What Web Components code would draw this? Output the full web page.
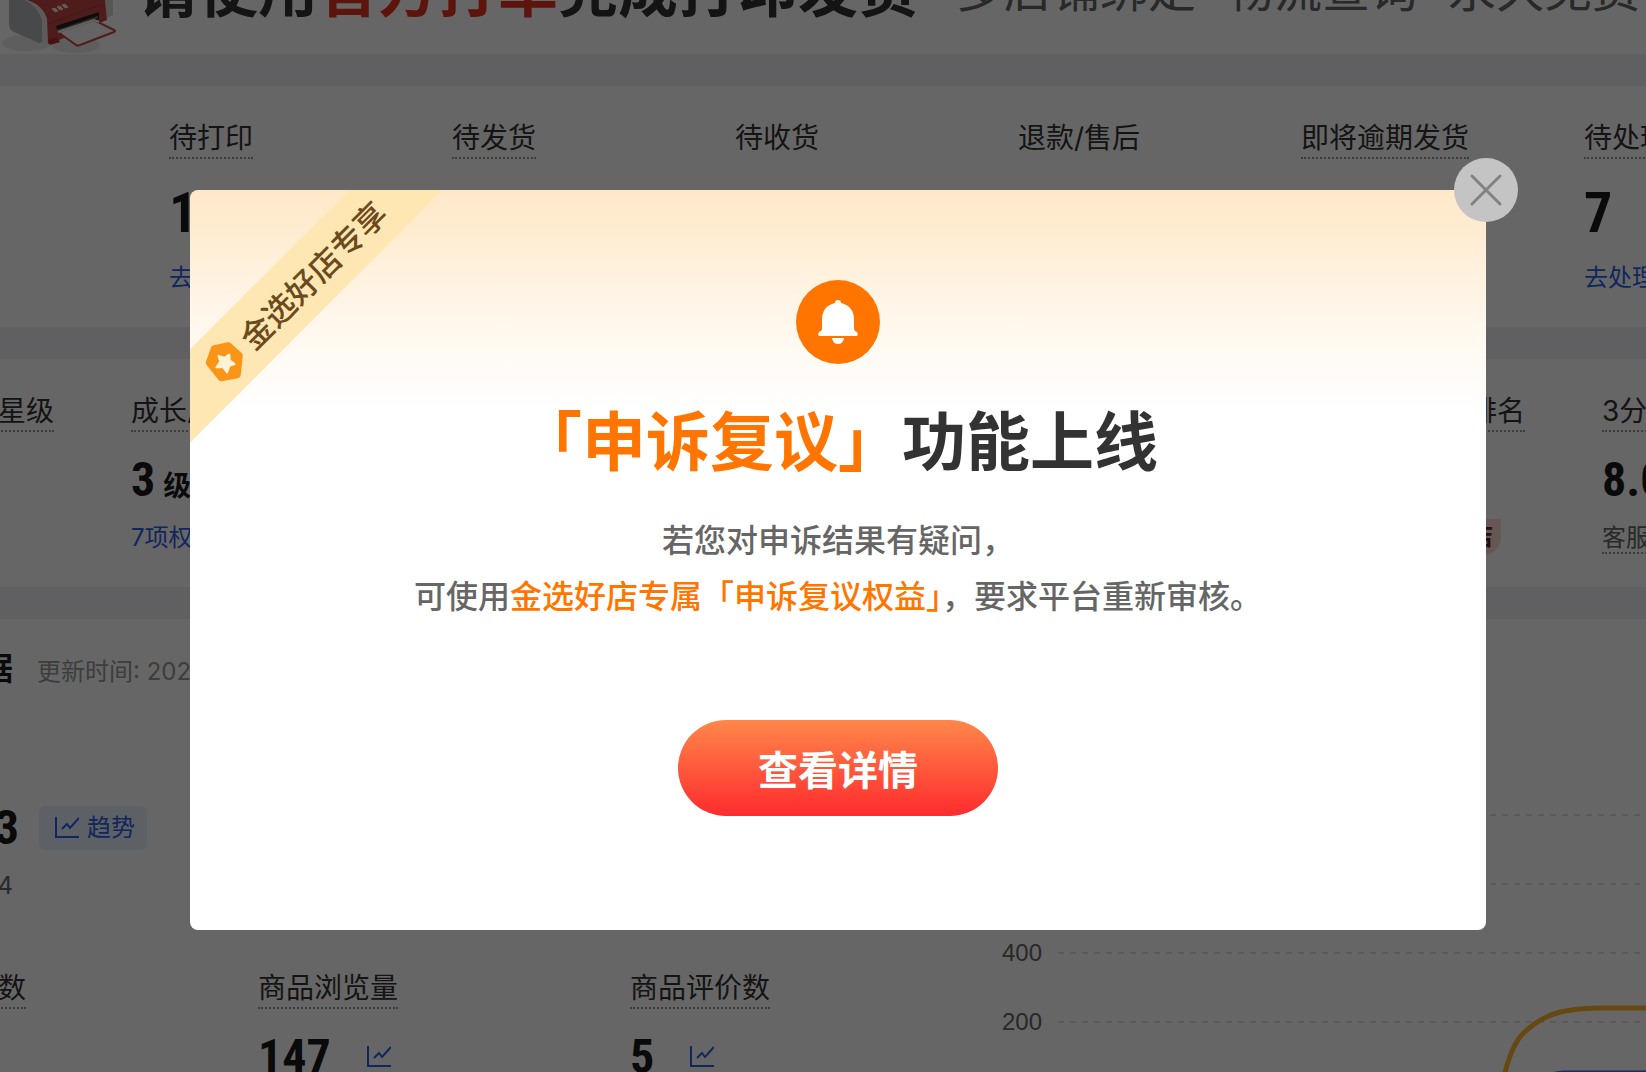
<!DOCTYPE html>
<html lang="zh-CN">
<head>
<meta charset="utf-8">
<meta name="viewport" content="width=device-width, initial-scale=1">
<title>商家后台</title>
<style>
  :root{
    --text:#333;--strong:#1a1a1a;--dim:#666;--faint:#999;--link:#2f5fea;--orange:#ff7500;
    --gap-bg:#f0f0f5;--num:"Liberation Sans Narrow","Roboto Condensed",Roboto,sans-serif;
  }
  html,body{margin:0;height:100%}
  body{position:relative;overflow:hidden;background:#fff;color:var(--text);font-family:Inter,"Noto Sans CJK SC",sans-serif}
  notice-modal b,notice-modal em{font-style:normal;font-weight:inherit;color:var(--orange)}
</style>
</head>
<body>
<shop-page>
  <print-banner></print-banner>

  <stat-row class="orders" large>
    <stat-item label="待打印" value="1" hint="去打印" link></stat-item>
    <stat-item label="待发货"></stat-item>
    <stat-item label="待收货" plain></stat-item>
    <stat-item label="退款/售后" plain></stat-item>
    <stat-item label="即将逾期发货"></stat-item>
    <stat-item label="待处理" value="7" hint="去处理" link></stat-item>
  </stat-row>

  <stat-row class="levels">
    <stat-item label="星级" class="lead"></stat-item>
    <stat-item label="成长层级" value="3" unit="级" hint="7项权益" link class="grow"></stat-item>
    <stat-item label="排名" class="rank"><span slot="hint">店</span></stat-item>
    <stat-item label="3分钟" value="8.0" hint="客服" class="last"></stat-item>
  </stat-row>

  <data-panel></data-panel>
</shop-page>

<notice-modal>
  <corner-ribbon slot="ribbon">金选好店专享</corner-ribbon>
  <span slot="title"><b>「申诉复议」</b>功能上线</span>
  <p slot="body">若您对申诉结果有疑问，<br>可使用<em>金选好店专属「申诉复议权益」</em>，要求平台重新审核。</p>
  <span slot="action">查看详情</span>
</notice-modal>

<script>
// Wspólny pomocnik: podpina shadow root z gotowym HTML
function shadow(el, html){
  const s = el.attachShadow({mode:'open'});
  s.innerHTML = html;
  return s;
}

// Układ strony: kolejne panele rozdzielone szarym pasem
customElements.define('shop-page', class extends HTMLElement{
  constructor(){
    super();
    shadow(this, `
      <style>
        :host{display:flex;flex-direction:column;gap:32px;background:var(--gap-bg)}
        ::slotted(*){background:#fff}
      </style>
      <slot></slot>
    `);
  }
});

customElements.define('print-banner', class extends HTMLElement{
  constructor(){
    super();
    shadow(this, `
      <style>
        :host{display:flex;align-items:flex-end;height:54px;overflow:hidden;white-space:nowrap}
        svg{flex:none;width:120px;height:54px;margin-right:18px}
        .copy{display:flex;align-items:center;padding-bottom:34px}
        h1{margin:0 38px 0 0;font-size:60px;line-height:60px;font-weight:700;color:var(--text)}
        h1 em{font-style:normal;color:#e6321e}
        ul{display:flex;gap:30px;margin:0;padding:0;list-style:none;font-size:48px;line-height:48px;color:var(--dim)}
      </style>
      <svg viewBox="0 0 120 54" aria-hidden="true">
        <ellipse cx="27" cy="43" rx="25" ry="8" fill="#ececec"/>
        <ellipse cx="76" cy="45" rx="24" ry="8" fill="#ebebeb"/>
        <path d="M105 0h8v15l-6 3z" fill="#d6d6d6"/>
        <path d="M24 0h81l2 20-48 20-11 4-3-18z" fill="#c04745"/>
        <path d="M48 24l55-20" stroke="#a83b3a" stroke-width="1"/>
        <path d="M48 40l9-3 3 5-10 3z" fill="#b22e2c"/>
        <path d="M9 0h18q16 5 20 19l1 23-8 1-28-12q-3-3-3-8z" fill="#e3e3e3"/>
        <path d="M9 0h15q13 5 18 20l0 22-3 1-27-12q-3-3-3-8z" fill="#b4b6b8"/>
        <path d="M52 9l3-1 3 3-3 1zM57 7l3-1 3 3-3 1zM62 5l3-1 3 3-3 1z" fill="#f3dcd9" stroke="#f3dcd9"/>
        <path d="M56 26l43-14v7l-41 13z" fill="#222"/>
        <path d="M57 30l41-14v2l-40 14z" fill="#777"/>
        <path d="M58 32l36-12 20 10q2 1 0 2l-34 13q-2 1-4 0z" fill="#fafafa" stroke="#cf4643" stroke-width="2"/>
        <path d="M58 32l36-12 5 2" fill="none" stroke="#fafafa" stroke-width="2"/>
      </svg>
      <div class="copy">
        <h1>请使用<em>官方打单</em>完成打印发货</h1>
        <ul><li>多店铺绑定</li><li>物流查询</li><li>永久免费</li></ul>
      </div>
    `);
  }
});

// Pojedyncza statystyka: etykieta, liczba, podpis
// attrs: label, value, unit, hint, link (podpis jako odnośnik), plain (bez kropkowanej linii)
customElements.define('stat-item', class extends HTMLElement{
  constructor(){
    super();
    const a = n => this.getAttribute(n) || '';
    const hint = !a('hint') ? '<slot name="hint"></slot>'
      : this.hasAttribute('link') ? `<a href="#">${a('hint')}</a>` : `<span class="dotted">${a('hint')}</span>`;
    shadow(this, `
      <style>
        :host{display:flex;flex-direction:column;align-items:flex-start;white-space:nowrap}
        .label{font-size:28px;line-height:38px;border-bottom:2px dotted var(--faint);color:var(--text)}
        :host([plain]) .label{border-color:transparent}
        .value{display:flex;align-items:baseline;gap:8px;margin-top:var(--value-gap,24px);height:var(--value-size,48px);font:700 var(--value-size,48px)/var(--value-size,48px) var(--num);color:var(--strong)}
        .value small{font:700 28px/28px "Noto Sans CJK SC",sans-serif}
        .hint{margin-top:var(--hint-gap,20px);font-size:24px;line-height:28px;height:30px;color:var(--dim)}
        a{color:var(--link);text-decoration:none}
        .dotted{display:block;border-bottom:2px dotted var(--faint)}
        ::slotted([slot=hint]){display:block;width:16px;margin-top:-5px;padding:4px 8px;direction:rtl;overflow:hidden;border-bottom-right-radius:18px;background:#ffd9d5;color:#5a2a20;font-weight:700}
      </style>
      <div class="label">${a('label')}</div>
      <div class="value">${a('value')}${a('unit') ? `<small>${a('unit')}</small>` : ''}</div>
      <div class="hint">${hint}</div>
    `);
  }
});

customElements.define('stat-row', class extends HTMLElement{
  constructor(){
    super();
    shadow(this, `
      <style>
        :host{display:flex;gap:77px;padding:33px 0;overflow:hidden}
        :host([large]){--value-size:56px;--value-gap:26px;--hint-gap:23px;display:grid;grid-auto-flow:column;grid-auto-columns:283px;gap:0;padding-left:169px}
        ::slotted(.lead){flex:none;width:54px;align-items:flex-end}
        ::slotted(.grow){flex:1}
        ::slotted(.rank){align-items:flex-start}
        ::slotted(.last){flex:none;width:44px}
      </style>
      <slot></slot>
    `);
  }
});

customElements.define('trend-icon', class extends HTMLElement{
  constructor(){
    super();
    shadow(this, `
      <style>:host{display:block;width:24px;height:24px;color:var(--link)}svg{display:block}</style>
      <svg width="24" height="24" viewBox="0 0 24 24" fill="none" stroke="currentColor" stroke-width="2" aria-hidden="true">
        <path d="M1 1v20h23"/><path d="M7 13l5-5 3 4 9-10"/>
      </svg>
    `);
  }
});

// Wykres liniowy z przerywaną siatką
customElements.define('line-chart', class extends HTMLElement{
  constructor(){
    super();
    const ticks = [800,600,400,200,0];
    shadow(this, `
      <style>
        :host{display:block;position:relative}
        .tick{display:flex;align-items:center;gap:16px;height:69px;font:24px/24px "Liberation Sans",sans-serif;color:var(--dim)}
        .tick i{flex:1;height:2px;background:repeating-linear-gradient(90deg,#e1e1e1 0 6px,transparent 6px 12px)}
        svg{position:absolute;right:0;top:207px}
      </style>
      ${ticks.map(t=>`<div class="tick"><span>${t}</span><i></i></div>`).join('')}
      <svg width="160" height="138" viewBox="0 0 160 138" fill="none" stroke-width="5" aria-hidden="true">
        <path d="M18 89C24 66 30 51 42 42C62 25 80 22 112 21H160" stroke="#ffb52e"/>
        <path d="M36 138C46 100 58 86 78 86H160" stroke="#3d6eff"/>
      </svg>
    `);
  }
});

customElements.define('data-panel', class extends HTMLElement{
  constructor(){
    super();
    shadow(this, `
      <style>
        :host{display:grid;grid-template-columns:1002px 1fr;white-space:nowrap}
        .left{padding-top:32px}
        .line{display:flex;align-items:center;gap:20px}
        .lead{display:flex;justify-content:flex-end;width:19px}
        .head{align-items:baseline;gap:24px;height:36px;margin-bottom:117px}
        .head .lead,.prev .lead{width:13px}
        h2{margin:0;font-size:32px;line-height:36px;color:var(--strong)}
        .time{font-size:24px;line-height:36px;color:var(--faint)}
        strong{font:700 48px/48px var(--num);color:var(--strong)}
        .pill{display:flex;align-items:center;gap:8px;height:44px;padding:0 12px 0 16px;border:0;border-radius:6px;background:#e8f1fc;color:var(--link);font:24px/28px Inter,"Noto Sans CJK SC",sans-serif}
        .prev{margin:20px 0 69px;font-size:24px;line-height:28px;color:var(--dim)}
        .cols{display:grid;grid-template-columns:258px 372px 1fr}
        .cell{display:flex;flex-direction:column;align-items:flex-start;gap:24px}
        .cell.first{width:26px;align-items:flex-end}
        .label{font-size:28px;line-height:38px;border-bottom:2px dotted var(--faint)}
        .num{display:flex;align-items:center;gap:36px}
        .icon{padding:0;border:0;background:none}
        line-chart{margin-top:161px}
      </style>
      <div class="left">
        <div class="line head"><div class="lead"><h2>据</h2></div><span class="time">更新时间: 2024</span></div>
        <div class="line"><div class="lead"><strong>3</strong></div><button class="pill"><trend-icon></trend-icon>趋势</button></div>
        <div class="line prev"><div class="lead">4</div></div>
        <div class="cols">
          <div class="cell first"><span class="label">数</span></div>
          <div class="cell"><span class="label">商品浏览量</span><div class="num"><strong>147</strong><button class="icon" aria-label="浏览量趋势"><trend-icon></trend-icon></button></div></div>
          <div class="cell"><span class="label">商品评价数</span><div class="num"><strong>5</strong><button class="icon" aria-label="评价数趋势"><trend-icon></trend-icon></button></div></div>
        </div>
      </div>
      <line-chart></line-chart>
    `);
  }
});

// Ukośna wstążka w rogu okna
customElements.define('corner-ribbon', class extends HTMLElement{
  constructor(){
    super();
    shadow(this, `
      <style>
        :host{position:absolute;left:0;top:0;width:256px;height:256px;overflow:hidden;border-top-left-radius:8px}
        .band{position:absolute;left:-95px;top:68px;width:400px;height:66px;display:flex;align-items:center;justify-content:center;gap:8px;background:#ffe7b4;color:#6b4a1c;font-size:32px;line-height:40px;font-weight:500;white-space:nowrap;transform:rotate(-45deg)}
        svg{transform:rotate(45deg)}
      </style>
      <div class="band">
        <svg width="40" height="40" viewBox="0 0 40 40" aria-hidden="true">
          <path d="M10 7L24 4L35 14L33 33L17 36L5 21Z" fill="#fa9518" stroke="#fa9518" stroke-width="7" stroke-linejoin="round"/>
          <path transform="translate(21 21) rotate(26)" d="M0-9L3-4L9-3L5 1L6 8L0 5L-6 8L-5 1L-9-3L-3-4Z" fill="#fff3d6" stroke="#fff3d6" stroke-width="2" stroke-linejoin="round"/>
        </svg>
        <slot></slot>
      </div>
    `);
  }
});

// Okno powiadomienia; sloty: ribbon, title, body, action
customElements.define('notice-modal', class extends HTMLElement{
  constructor(){
    super();
    const s = shadow(this, `
      <style>
        :host{position:absolute;inset:0;display:grid;align-items:start;padding:190px 160px 142px 190px;background:rgba(0,0,0,.6);font-family:"Noto Sans CJK SC",sans-serif}
        :host([hidden]){display:none}
        .box{position:relative;display:flex;flex-direction:column;align-items:center;padding:90px 40px 114px;border-radius:8px;background:linear-gradient(#ffe8ca 0,#ffebcf 32px,#fff7ec 130px,#fff 220px) #fff}
        .close{position:absolute;right:-32px;top:-32px;width:64px;height:64px;padding:0;border:0;border-radius:50%;background:#c4c4c4;cursor:pointer}
        .close svg,.bell{display:block}
        h2{margin:35px 0 0;font-size:64px;line-height:76px;font-weight:700;color:var(--text)}
        ::slotted([slot=body]){margin:0}
        .body{margin-top:35px;font-size:32px;line-height:56px;font-weight:500;color:var(--dim);text-align:center}
        .action{width:320px;height:96px;margin-top:98px;border:0;border-radius:48px;background:linear-gradient(#ff874a,#ff2b2e);color:#fff;font:700 40px/48px "Noto Sans CJK SC",sans-serif;cursor:pointer}
      </style>
      <div class="box" role="dialog" aria-modal="true">
        <slot name="ribbon"></slot>
        <svg class="bell" width="84" height="84" viewBox="0 0 84 84" aria-hidden="true">
          <circle cx="42" cy="42" r="42" fill="#ff7500"/>
          <path d="M42 20q3 0 3 3q13 3 13 17v9q0 2 3 3q2 4-1 4H24q-3 0-1-4q3-1 3-3V40q0-14 13-17q0-3 3-3z" fill="#fff"/>
          <path d="M36 58h12q-1 6-6 6t-6-6z" fill="#fff"/>
        </svg>
        <h2><slot name="title"></slot></h2>
        <div class="body"><slot name="body"></slot></div>
        <button class="action"><slot name="action"></slot></button>
        <button class="close" aria-label="关闭">
          <svg width="64" height="64" viewBox="0 0 64 64" fill="none" stroke="#828282" stroke-width="3" stroke-linecap="round"><path d="M18 18l28 28M46 18L18 46"/></svg>
        </button>
      </div>
    `);
    s.querySelector('.close').addEventListener('click', ()=> this.hidden = true);
  }
});
</script>
</body>
</html>
